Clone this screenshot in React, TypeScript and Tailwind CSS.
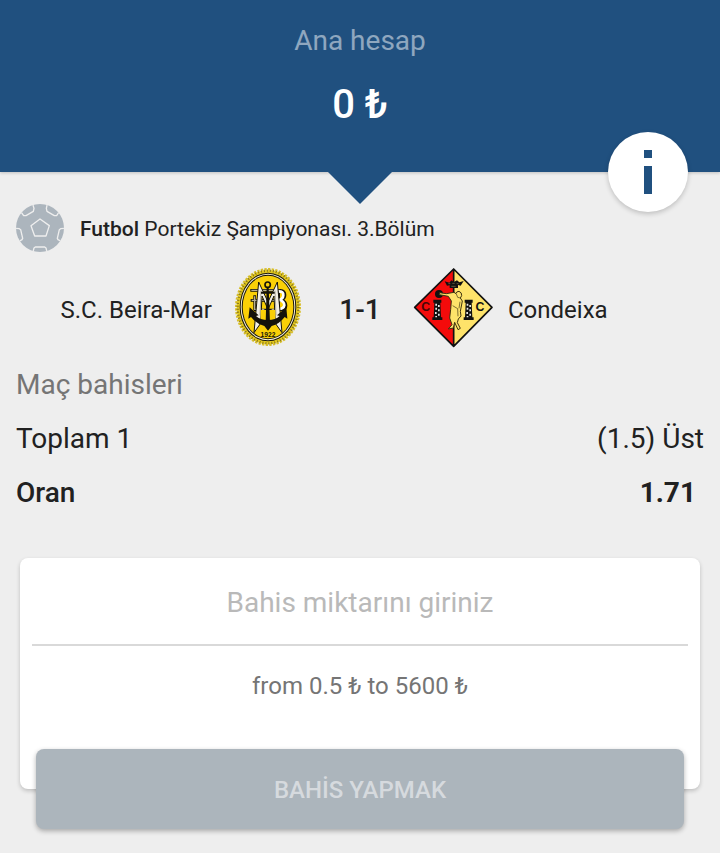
import { useState } from "react";

function BallIcon() {
	return (
		<svg viewBox="48 42 144 144" className="size-12 shrink-0" aria-hidden="true">
			<clipPath id="ball">
				<circle cx="120" cy="114" r="72" />
			</clipPath>
			<circle cx="120" cy="114" r="72" fill="#acb5bd" />
			<g
				clipPath="url(#ball)"
				fill="none"
				stroke="#eeeeee"
				strokeWidth="4"
				strokeLinejoin="round"
			>
				<path d="M120 87 L148 107 L138 138 H104 L93 107 Z" />
				<path d="M63 66 L71 77 H78 L100 64 L102 55 L98 42" />
				<path d="M177 66 L170 77 H163 L141 64 L139 55 L142 42" />
				<path d="M46 115 L58 116 L62 119 L68 145 L66 149 L54 156" />
				<path d="M194 115 L182 116 L178 119 L172 145 L174 149 L187 156" />
				<path d="M98 190 L102 174 L106 171 H134 L138 174 L142 190" />
			</g>
		</svg>
	);
}

function BeiraMarCrest() {
	return (
		<svg
			viewBox="9 24 240 240"
			className="size-20 shrink-0"
			role="img"
			aria-label="S.C. Beira-Mar"
		>
			{/* rope border */}
			<ellipse cx="129" cy="141" rx="94" ry="112" fill="#e3c81e" />
			<ellipse
				cx="129"
				cy="141"
				rx="96"
				ry="114"
				fill="none"
				stroke="#d8bf2a"
				strokeWidth="6"
				strokeDasharray="7 4"
			/>
			<ellipse
				cx="129"
				cy="141"
				rx="91"
				ry="109"
				fill="none"
				stroke="#85741a"
				strokeWidth="7"
				strokeDasharray="3 6"
			/>
			<ellipse cx="129" cy="141" rx="85" ry="103" fill="#15130a" />
			<ellipse cx="129" cy="141" rx="82" ry="100" fill="#f6f0d2" />
			<ellipse cx="129" cy="141" rx="79" ry="97" fill="#15130a" />
			<ellipse cx="129" cy="141" rx="76" ry="94" fill="#fad007" />
			{/* monogram */}
			<g fill="none">
				<path
					d="M76 91 H166 Q180 92 180 105 Q180 116 170 120 Q183 124 183 137 Q183 150 165 150 H86 M77 121 H170 M89 106 V150 M161 94 V149"
					stroke="#15130a"
					strokeWidth="8"
				/>
				<path
					d="M79 91 H164 M80 121 H166 M89 109 V148 H118 M140 148 H160"
					stroke="#b9b091"
					strokeWidth="4"
				/>
				<path
					d="M161 94 Q176 94 175 106 Q174 117 162 120 Q178 123 178 136 Q176 147 161 147"
					stroke="#fff"
					strokeWidth="8"
				/>
			</g>
			<path
				d="M87 218 L101 66 L129 126 L157 66 L171 218 L151 190 L147 108 L129 148 L111 108 L107 190 Z"
				fill="#f3f0e6"
				stroke="#15130a"
				strokeWidth="3"
			/>
			<path
				d="M108 92 L105 166 M150 92 L153 166"
				fill="none"
				stroke="#8b8571"
				strokeWidth="2"
			/>
			<path d="M107 190 L128 208 L151 190 V150 H107 Z" fill="#fad007" />
			{/* anchor */}
			<circle
				cx="128"
				cy="74"
				r="8"
				fill="none"
				stroke="#15130a"
				strokeWidth="5"
			/>
			<path
				d="M125 82 H131 L135 188 H122 Z M108 95 H149 V101 H108 Z"
				fill="#15130a"
			/>
			<path
				d="M70 176 L74 142 L101 166 L93 168 Q105 180 129 180 Q152 180 164 168 L156 166 L184 142 L187 176 L179 171 Q163 192 140 198 L129 212 L118 198 Q95 192 78 171 Z"
				fill="#15130a"
			/>
			<text
				x="129"
				y="232"
				textAnchor="middle"
				fill="#15130a"
				className="font-['Liberation_Sans',sans-serif] text-[20px] font-bold"
			>
				1922
			</text>
		</svg>
	);
}

function Tower({ x }: { x: number }) {
	return (
		<g transform={`translate(${x} 119)`}>
			<path d="M1 0 H25 V9 H22 L24 53 H28 V61 H-2 V53 H2 L4 9 H1 Z" fill="#111" />
			<path
				d="M7 12h5v6h-5z M15 16h5v6h-5z M7 24h5v6h-5z M15 29h5v6h-5z M6 37h5v6h-5z M15 42h5v6h-5z M7 49h5v4h-5z"
				fill="#e8e8e8"
			/>
		</g>
	);
}

function CondeixaCrest() {
	return (
		<svg
			viewBox="21 24 240 240"
			className="size-20 shrink-0 overflow-visible"
			role="img"
			aria-label="Condeixa"
		>
			<path d="M146 27 L29 142 L146 260 Z" fill="#f40b0b" />
			<path d="M146 27 L261 142 L146 260 Z" fill="#fee36a" />
			<path
				d="M146 27 L261 142 L146 259 L29 142 Z M146 27 V259"
				fill="none"
				stroke="#111"
				strokeWidth="5"
				strokeLinejoin="round"
			/>
			{/* crown */}
			<path
				d="M119 64 L133 68 L139 61 L147 66 L156 61 L163 67 L176 63 L167 77 L159 75 V84 H134 V76 L126 77 Z"
				fill="#111"
			/>
			<path
				d="M130 71 h6 M142 70 h7 M155 71 h6 M139 79 h13"
				stroke="#877e4e"
				strokeWidth="2"
			/>
			<Tower x={84} />
			<Tower x={178} />
			{/* discus thrower */}
			<circle cx="102" cy="102" r="12" fill="#111" />
			<path
				d="M104 98 L124 101 L147 97 L153 101 Q154 94 162 94 Q171 97 170 107 L166 114 L172 123 L166 154 L168 168 L160 177 L157 188 L166 205 L159 209 L149 187 L145 204 L130 207 L141 194 L134 174 L137 148 L139 123 L130 109 L103 104 Z"
				fill="#fee36a"
				stroke="#3d3210"
				strokeWidth="3"
				strokeLinejoin="round"
			/>
			<path
				d="M154 102 L158 112 L166 114 M143 137 L158 146 L159 169 M165 125 L162 145"
				fill="none"
				stroke="#3d3210"
				strokeWidth="2"
			/>
			<g
				fill="#111"
				textAnchor="middle"
				className="font-['Liberation_Sans',sans-serif] text-[37px] font-bold"
			>
				<text x="62" y="154" fill="#4a0505">
					C
				</text>
				<text x="225" y="154">
					C
				</text>
			</g>
		</svg>
	);
}

function App() {
	const [amount, setAmount] = useState<string>("");

	return (
		<div className="min-h-screen bg-[#eeeeee] pb-6 font-['Roboto','Noto_Sans',sans-serif] text-[#212121]">
			<header className="relative flex h-[172px] flex-col items-center bg-[#20507f] pt-[21px] shadow-[0_1px_3px_rgba(0,0,0,0.2)]">
				<p className="text-[28px] leading-10 text-white/50">Ana hesap</p>
				<p className="mt-5 text-[40px] leading-12 font-medium text-white">0 ₺</p>
				<svg
					viewBox="0 0 64 32"
					className="absolute top-full left-1/2 h-8 w-16 -translate-x-1/2"
					aria-hidden="true"
				>
					<path d="M0 0 H64 L32 32 Z" fill="#20507f" />
				</svg>
				<button
					type="button"
					aria-label="Bilgi"
					className="absolute right-8 -bottom-10 size-20 cursor-pointer rounded-full bg-white shadow-[0_2px_5px_rgba(0,0,0,0.2)]"
				>
					<svg viewBox="0 0 80 80" className="size-20">
						<path d="M36 18h8v8h-8z M36 34h8v28h-8z" fill="#20507f" />
					</svg>
				</button>
			</header>

			<main className="px-4 pt-8">
				<div className="flex items-center gap-4">
					<BallIcon />
					<p className="pt-0.5 text-[21px] leading-8">
						<span className="font-medium">Futbol</span> Portekiz Şampiyonası. 3.Bölüm
					</p>
				</div>

				<div className="mt-4 grid grid-cols-[1fr_104px_1fr] items-center text-2xl">
					<div className="flex items-center justify-end gap-4">
						<span className="pt-1">S.C. Beira-Mar</span>
						<BeiraMarCrest />
					</div>
					<span className="pt-1 text-center text-[28px] font-medium">1-1</span>
					<div className="flex items-center gap-4">
						<CondeixaCrest />
						<span className="pt-1">Condeixa</span>
					</div>
				</div>

				<div className="mt-[19px] flex flex-col gap-[18px] text-[28px] leading-9">
					<h2 className="text-[#757575]">Maç bahisleri</h2>
					<div className="flex justify-between">
						<span>Toplam 1</span>
						<span>(1.5) Üst</span>
					</div>
					<div className="flex justify-between font-medium">
						<span>Oran</span>
						<span className="pr-2 font-bold">1.71</span>
					</div>
				</div>

				<form className="mx-1 mt-[47px]" onSubmit={(e) => e.preventDefault()}>
					<div className="rounded-lg bg-white px-3 pb-[87px] shadow-[0_2px_4px_rgba(0,0,0,0.2)]">
						<input
							type="text"
							inputMode="decimal"
							name="amount"
							aria-label="Bahis miktarını giriniz"
							placeholder="Bahis miktarını giriniz"
							value={amount}
							onChange={(e) => setAmount(e.target.value)}
							className="block h-[88px] w-full border-b-2 border-[#d9d9d9] pt-0.5 text-center text-[28px] placeholder:text-[#b9b9b9] focus:outline-none"
						/>
						<p className="pt-6 text-center text-2xl text-[#757575]">
							from 0.5 ₺ to 5600 ₺
						</p>
					</div>
					<div className="-mt-10 px-4">
						<button
							type="submit"
							className="block h-20 w-full cursor-pointer rounded-lg bg-[#acb5bc] pt-0.5 text-2xl font-medium text-[#d6dade] shadow-[0_2px_5px_rgba(0,0,0,0.3)]"
						>
							BAHİS YAPMAK
						</button>
					</div>
				</form>
			</main>
		</div>
	);
}

export default App;
